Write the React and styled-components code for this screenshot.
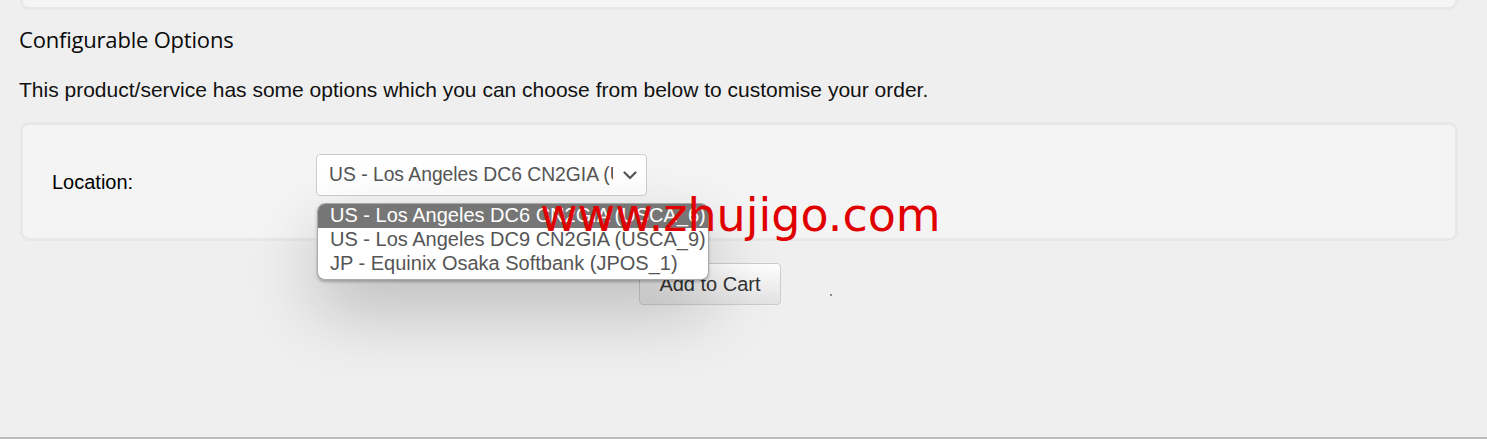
import styled, { createGlobalStyle } from 'styled-components';

const GlobalStyle = createGlobalStyle`
    html, body {
        margin: 0;
        padding: 0;
        background: #efefef;
    }
    * {
        box-sizing: border-box;
    }
`;

const options = [
    'US - Los Angeles DC6 CN2GIA (USCA_6)',
    'US - Los Angeles DC9 CN2GIA (USCA_9)',
    'JP - Equinix Osaka Softbank (JPOS_1)',
];

const App = () => {
    return (
        <Page>
            <GlobalStyle />
            <TopCard />
            <Heading>Configurable Options</Heading>
            <Intro>This product/service has some options which you can choose from below to customise your order.</Intro>
            <Card>
                <Label>Location:</Label>
                <SelectWrap>
                    <Select>
                        <SelectText>{options[0]}</SelectText>
                        <Chevron viewBox="0 0 16 16">
                            <path d="M2.5 5.5l5.5 5.5 5.5-5.5" fill="none" stroke="#555" strokeWidth="2.2" strokeLinecap="round" strokeLinejoin="round" />
                        </Chevron>
                    </Select>
                    <ListBox>
                        {options.map((opt, i) => (
                            <Option key={opt} selected={i === 0}>{opt}</Option>
                        ))}
                    </ListBox>
                </SelectWrap>
            </Card>
            <Actions>
                <CartButton>Add to Cart</CartButton>
                <Dot />
            </Actions>
            <Watermark>www.zhujigo.com</Watermark>
        </Page>
    );
};

const Page = styled.div`
    position: relative;
    height: 439px;
    padding: 0 29px 0 20px;
    border-bottom: 2px solid #bdbdbd;
    font-family: 'Liberation Sans', Arial, sans-serif;
    overflow: hidden;
`;

const TopCard = styled.div`
    height: 10px;
    background: #f5f5f5;
    border: 3px solid #e8e8e8;
    border-top: none;
    border-radius: 0 0 9px 9px;
`;

const Heading = styled.h2`
    margin: 14px 0 0 -1px;
    font-family: 'Open Sans', sans-serif;
    font-size: 22px;
    font-weight: 400;
    line-height: 30px;
    letter-spacing: -0.2px;
    color: #0a0a0a;
`;

const Intro = styled.p`
    margin: 24px 0 0 -1px;
    font-size: 21px;
    line-height: 24px;
    color: #111;
`;

const Card = styled.div`
    display: flex;
    align-items: flex-start;
    margin-top: 20px;
    height: 119px;
    padding: 29px 0 0 29px;
    background: #f4f4f4;
    border: 3px solid #e8e8e8;
    border-radius: 9px;
`;

const Label = styled.div`
    width: 264px;
    padding-top: 17px;
    font-size: 20px;
    color: #000;
`;

const SelectWrap = styled.div`
    position: relative;
`;

const Select = styled.div`
    display: flex;
    align-items: center;
    width: 331px;
    height: 42px;
    padding: 0 8px 0 12px;
    background: #fff;
    border: 1px solid #ccc;
    border-radius: 4px;
`;

const SelectText = styled.span`
    flex: 1;
    overflow: hidden;
    white-space: nowrap;
    font-size: 19.3px;
    color: #555;
`;

const Chevron = styled.svg`
    width: 16px;
    height: 16px;
    margin-left: 9px;
`;

const ListBox = styled.div`
    position: absolute;
    top: 49px;
    left: 1px;
    width: 392px;
    padding-bottom: 3px;
    background: #fff;
    border: 1px solid #a9a9a9;
    border-radius: 8px;
    overflow: hidden;
    box-shadow: 0 2px 3px rgba(0, 0, 0, 0.25), 0 30px 70px rgba(0, 0, 0, 0.22);
    z-index: 2;
`;

const Option = styled.div`
    height: 24px;
    padding: 0 12px;
    font-size: 20px;
    line-height: 22px;
    white-space: nowrap;
    color: ${({ selected }) => (selected ? '#fff' : '#555')};
    background: ${({ selected }) => (selected ? '#767676' : 'transparent')};
`;

const Actions = styled.div`
    position: relative;
    display: flex;
    margin-top: 22px;
    padding-left: 619px;
`;

const CartButton = styled.button`
    width: 142px;
    height: 42px;
    font-family: 'Liberation Sans', Arial, sans-serif;
    font-size: 20px;
    color: #333;
    background: linear-gradient(#fff, #e2e2e2);
    border: 1px solid #ccc;
    border-radius: 4px;
`;

const Dot = styled.span`
    width: 2px;
    height: 2px;
    margin: 31px 0 0 49px;
    background: #888;
`;

const Watermark = styled.div`
    position: absolute;
    left: 540px;
    top: 188px;
    font-family: 'DejaVu Sans', sans-serif;
    font-size: 46px;
    color: #e10000;
    z-index: 3;
    pointer-events: none;
`;

export default App;
